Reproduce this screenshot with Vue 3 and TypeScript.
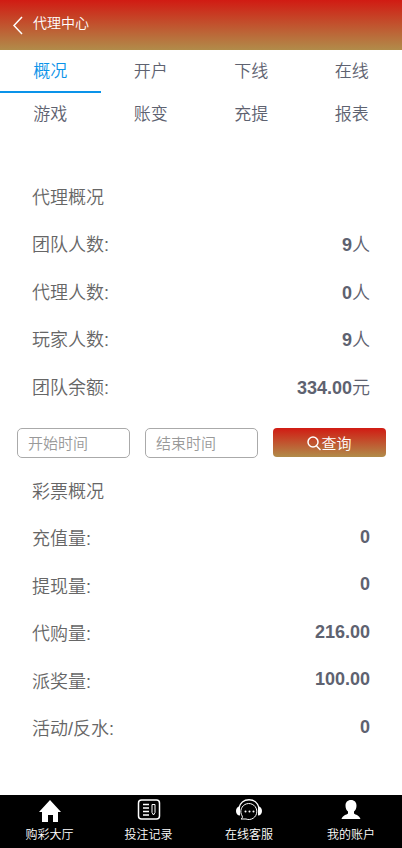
<script setup lang="ts">
import { ref } from 'vue'

interface Stat {
  label: string
  value: string
  unit?: string
}

const tabs: string[] = ['概况', '开户', '下线', '在线', '游戏', '账变', '充提', '报表']
const activeTab = ref('概况')
const startTime = ref('')
const endTime = ref('')

const agentStats: Stat[] = [
  { label: '团队人数:', value: '9', unit: '人' },
  { label: '代理人数:', value: '0', unit: '人' },
  { label: '玩家人数:', value: '9', unit: '人' },
  { label: '团队余额:', value: '334.00', unit: '元' },
]

const lotteryStats: Stat[] = [
  { label: '充值量:', value: '0' },
  { label: '提现量:', value: '0' },
  { label: '代购量:', value: '216.00' },
  { label: '派奖量:', value: '100.00' },
  { label: '活动/反水:', value: '0' },
]
</script>

<template>
  <div class="page">
    <header class="header">
      <button class="back" type="button" aria-label="返回">
        <svg width="12" height="20" viewBox="0 0 12 20">
          <path d="M10 2 2 10.500 10 19" />
        </svg>
      </button>
      <h1 class="title">代理中心</h1>
    </header>

    <nav class="tabs">
      <button
        v-for="tab in tabs"
        :key="tab"
        type="button"
        class="tab"
        :class="{ active: tab === activeTab }"
        @click="activeTab = tab"
      >
        {{ tab }}
      </button>
    </nav>

    <main class="content">
      <section class="stats">
        <h2 class="heading">代理概况</h2>
        <div v-for="item in agentStats" :key="item.label" class="row">
          <span class="label">{{ item.label }}</span>
          <span class="value"><b>{{ item.value }}</b>{{ item.unit }}</span>
        </div>
      </section>

      <form class="filter" @submit.prevent>
        <input v-model="startTime" class="field" type="text" placeholder="开始时间" aria-label="开始时间" />
        <input v-model="endTime" class="field" type="text" placeholder="结束时间" aria-label="结束时间" />
        <button class="search" type="submit">
          <svg width="14" height="16" viewBox="0 0 14 16">
            <circle cx="6" cy="7" r="5" />
            <path d="m9.500 11 4 4" />
          </svg>
          <span>查询</span>
        </button>
      </form>

      <section class="stats">
        <h2 class="heading">彩票概况</h2>
        <div v-for="item in lotteryStats" :key="item.label" class="row">
          <span class="label">{{ item.label }}</span>
          <span class="value"><b>{{ item.value }}</b></span>
        </div>
      </section>
    </main>

    <nav class="bottom">
      <a class="link" href="#lobby">
        <svg width="26" height="24" viewBox="0 0 26 24">
          <path class="fill" d="M13 1 24 13h-3v10h-5v-7h-5v7H5V13H2Z" />
        </svg>
        <span>购彩大厅</span>
      </a>
      <a class="link" href="#records">
        <svg width="26" height="24" viewBox="0 0 26 24">
          <rect x="2.500" y="1" width="21" height="19" rx="3" />
          <path d="M7 5.500h6M7 9h6M7 12.500h6M7 16h6" />
          <path class="thin" d="M16 5.500h3v8L17.500 16 16 13.500Z" />
        </svg>
        <span>投注记录</span>
      </a>
      <a class="link" href="#service">
        <svg width="26" height="24" viewBox="0 0 26 24">
          <path d="M3 9C4 4 8 .8 13 .8S22 4 23 9" />
          <path class="fill" d="M4 7.500v9C1.500 16.500 0 14.500 0 12s1.500-4.500 4-4.500ZM22 7.500v9c2.500 0 4-2 4-4.500s-1.500-4.500-4-4.500Z" />
          <path class="thin" d="M5 20c1.200-.6 1.700-1.700 1.200-3A8 8 0 1 1 10 20Z" />
          <path class="dots" d="M9.500 12.500h0M13.500 12.500h0M17.500 12.500h0" />
        </svg>
        <span>在线客服</span>
      </a>
      <a class="link" href="#account">
        <svg width="26" height="24" viewBox="0 0 26 24">
          <path class="fill" d="M13 1c3.500 0 5.500 2.300 5.500 5.700 0 2.600-1 4.600-2.500 5.800v2c1.500 1.500 5.300 1.600 6.500 5.500h-19c1.200-3.900 5-4 6.500-5.500v-2c-1.500-1.200-2.500-3.200-2.500-5.800C7.500 3.300 9.500 1 13 1Z" />
        </svg>
        <span>我的账户</span>
      </a>
    </nav>
  </div>
</template>

<style>
body {
  background: #fff;
}
</style>

<style scoped>
.page {
  display: flex;
  flex-direction: column;
  min-height: 100vh;
  color: #666;
  font-family: 'Liberation Sans', 'Noto Sans CJK SC', sans-serif;
  font-weight: 350;
}
.page * {
  box-sizing: border-box;
}
button,
input {
  margin: 0;
  padding: 0;
  border: 0;
  background: none;
  color: inherit;
  font: inherit;
}
button {
  cursor: pointer;
}
.header {
  display: flex;
  align-items: center;
  gap: 9px;
  height: 50px;
  padding: 0 12px;
  color: #fff;
  background: linear-gradient(#d11b13, #b18c4a);
}
.back {
  display: flex;
}
.title {
  margin: 0;
  padding-bottom: 5px;
  font-size: 14px;
  font-weight: 350;
  line-height: 20px;
}
svg {
  fill: none;
  stroke: #fff;
  stroke-width: 1.5;
}
.tabs {
  display: grid;
  grid-template-columns: repeat(4, 1fr);
}
.tab {
  height: 43px;
  padding-bottom: 2px;
  border-bottom: 2px solid transparent;
  color: #5e6270;
  font-size: 17px;
}
.active {
  border-color: #0a93e9;
  color: #0a93e9;
}
.content {
  flex: 1;
  padding: 36px 16px 44px;
}
.stats {
  display: grid;
  grid-auto-rows: 47px 48px;
  padding: 0 16px;
  font-size: 18px;
}
.heading,
.row {
  display: flex;
  align-items: center;
  justify-content: space-between;
  margin: 0;
  font-size: 18px;
  font-weight: 350;
}
.value {
  color: #5e6270;
}
.value b {
  font-weight: 700;
}
.filter {
  display: grid;
  grid-template-columns: repeat(3, 1fr);
  gap: 15px;
  padding: 19px 0 8px 1px;
}
.field {
  width: 100%;
  min-width: 0;
  height: 30px;
  padding: 0 10px;
  border: 1px solid #aaa;
  border-radius: 5px;
  font-size: 15px;
}
.field::placeholder {
  color: #999;
  opacity: 1;
}
.search {
  display: flex;
  align-items: center;
  justify-content: center;
  height: 29px;
  border-radius: 4px;
  color: #fff;
  background: linear-gradient(#d11b13, #b18c4a);
  font-size: 15px;
}
.bottom {
  position: sticky;
  bottom: 0;
  display: grid;
  grid-template-columns: 33fr 33fr 34fr 34fr;
  height: 53px;
  background: #000;
}
.link {
  display: flex;
  flex-direction: column;
  align-items: center;
  gap: 3px;
  padding-top: 4px;
  color: #fff;
  font-size: 12px;
  line-height: 18px;
  text-decoration: none;
}
.fill {
  fill: #fff;
  stroke: none;
}
.thin {
  stroke-width: 1;
}
.dots {
  stroke-width: 2;
  stroke-linecap: round;
}
</style>
